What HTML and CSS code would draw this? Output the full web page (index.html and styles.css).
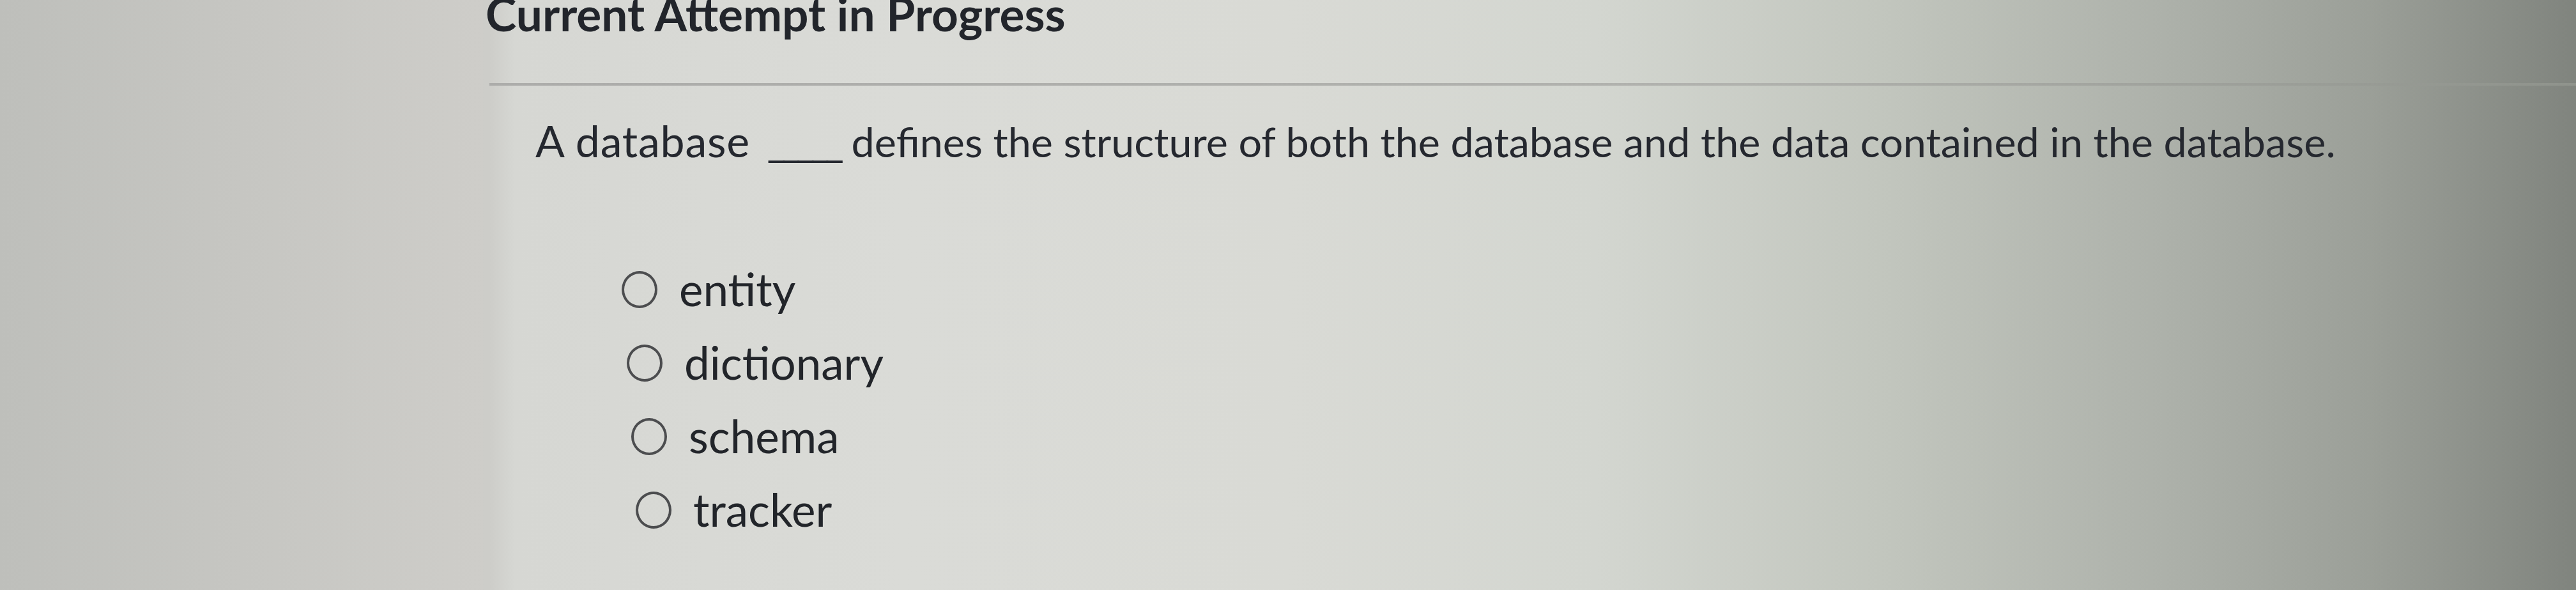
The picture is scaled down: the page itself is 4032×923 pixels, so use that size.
FILE: index.html
```html
<!DOCTYPE html>
<html lang="en">
<head>
<meta charset="utf-8">
<title>Current Attempt in Progress</title>
<link rel="stylesheet" href="styles.css">
</head>
<body>
<div class="screen">
  <div class="gutter"></div>
  <main class="panel">
    <h1 class="title">Current Attempt in Progress</h1>
    <div class="rule"></div>
    <p class="question"><span class="lead">A database</span> <span class="blank">_____</span> defines the structure of both the database and the data contained in the database.</p>
    <ul class="options">
      <li class="option"><span class="radio"></span><span class="label">entity</span></li>
      <li class="option"><span class="radio"></span><span class="label">dictionary</span></li>
      <li class="option"><span class="radio"></span><span class="label">schema</span></li>
      <li class="option"><span class="radio"></span><span class="label">tracker</span></li>
    </ul>
  </main>
</div>
</body>
</html>
```
FILE: styles.css
```css
html, body {
  margin: 0;
  padding: 0;
  height: 100%;
  overflow: hidden;
}
body {
  font-family: Lato, "Open Sans", "Liberation Sans", sans-serif;
  color: #272a30;
  background: linear-gradient(90deg,
    #c6c6c2 0%,
    #cdcdc9 19%,
    #d6d7d3 20%,
    #dadbd7 35%,
    #d9dad5 50%,
    #d3d6d0 62%,
    #c2c6be 73%,
    #adb1aa 84%,
    #9b9f98 92%,
    #80847e 100%);
}
.screen {
  display: flex;
  height: 100%;
}
.gutter {
  width: 756px;
  flex: none;
  background: linear-gradient(90deg, #bebfbb 0%, #c6c6c2 50%, #cecdc9 100%);
}
.panel {
  flex: 1;
  display: flex;
  flex-direction: column;
}
.title {
  margin: -22px 0 0 4px;
  font-size: 73px;
  line-height: 1.2;
  font-weight: 700;
  color: #22252b;
  white-space: nowrap;
}
.rule {
  margin: 64px 0 0 10px;
  height: 4px;
  background: linear-gradient(90deg, #acacaa 0%, #b1b2ae 60%, #8f938c 100%);
}
.question {
  margin: 48px 0 0 82px;
  font-size: 64.7px;
  line-height: 78px;
  white-space: nowrap;
  color: #25282f;
}
.lead {
  font-size: 68px;
  line-height: 1;
  letter-spacing: 0.8px;
}
.blank {
  letter-spacing: -7px;
  margin-left: 10px;
  margin-right: 2px;
}
.options {
  list-style: none;
  margin: 134px 0 0 217px;
  padding: 0;
  display: flex;
  flex-direction: column;
}
.option {
  display: flex;
  align-items: center;
  gap: 34px;
  height: 115px;
  font-size: 71px;
  color: #22252a;
}
.option:nth-child(2) { margin-left: 8px; }
.option:nth-child(3) { margin-left: 15px; }
.option:nth-child(4) { margin-left: 22px; }
.radio {
  flex: none;
  width: 48px;
  height: 50px;
  border: 4.5px solid #4c4d4f;
  border-radius: 50%;
  margin-top: 4px;
}
.label {
  line-height: 115px;
}
```
